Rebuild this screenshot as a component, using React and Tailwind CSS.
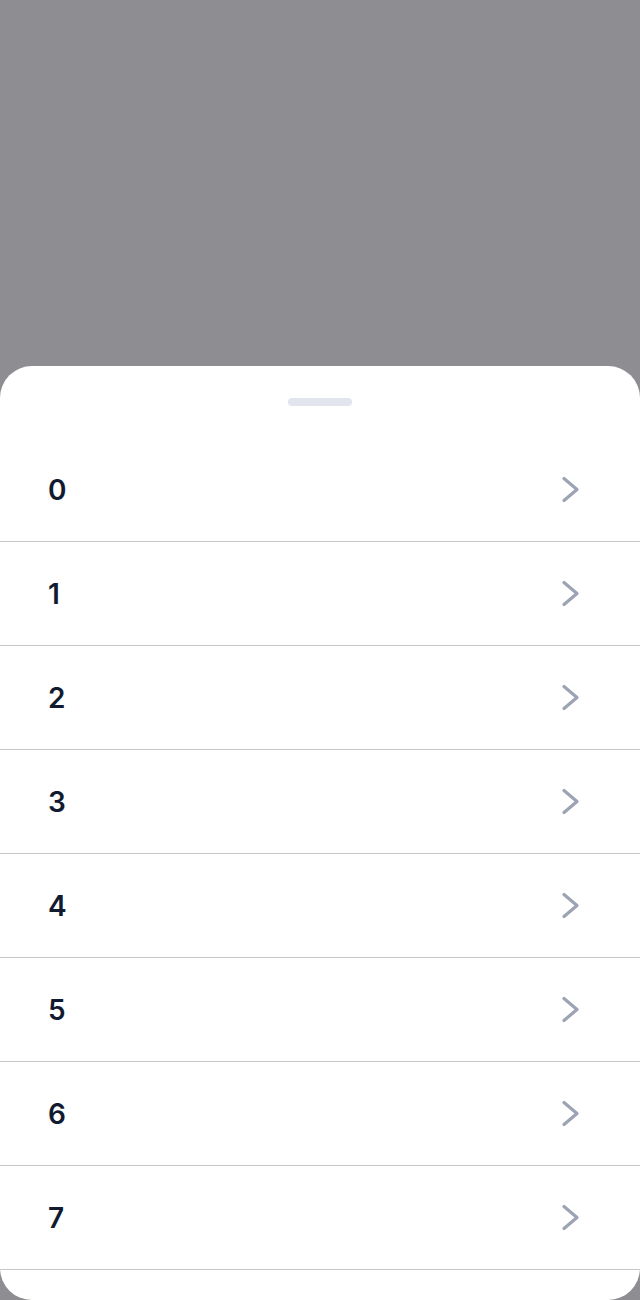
import React from "react";

function Chevron() {
  return (
    <svg width="24" height="30" viewBox="0 0 24 30" fill="none" className="shrink-0">
      <path
        d="M5 3.5 L18 14.5 L5 25.5"
        stroke="#9ba3b4"
        strokeWidth="3.2"
        strokeLinecap="round"
        strokeLinejoin="round"
      />
    </svg>
  );
}

export default function App() {
  const items = [0, 1, 2, 3, 4, 5, 6, 7];
  return (
    <div
      className="h-[1300px] w-[640px] flex flex-col bg-[#8e8d92] overflow-hidden"
      style={{ fontFamily: "Inter, 'Noto Sans', sans-serif" }}
    >
      <div className="h-[366px] shrink-0" />
      <div className="flex-1 min-h-0 bg-white rounded-[32px] overflow-hidden flex flex-col">
        <div className="pt-8 pb-8 flex justify-center shrink-0">
          <div className="w-16 h-2 rounded-full bg-[#e2e5ed]" />
        </div>
        {items.map((n) => (
          <div
            key={n}
            className="h-[104px] shrink-0 flex items-center justify-between pl-12 pr-[57px] border-b border-[#c8c8ca]"
          >
            <span className="text-[28px] font-semibold text-[#111a2e] leading-none">{n}</span>
            <Chevron />
          </div>
        ))}
      </div>
    </div>
  );
}
